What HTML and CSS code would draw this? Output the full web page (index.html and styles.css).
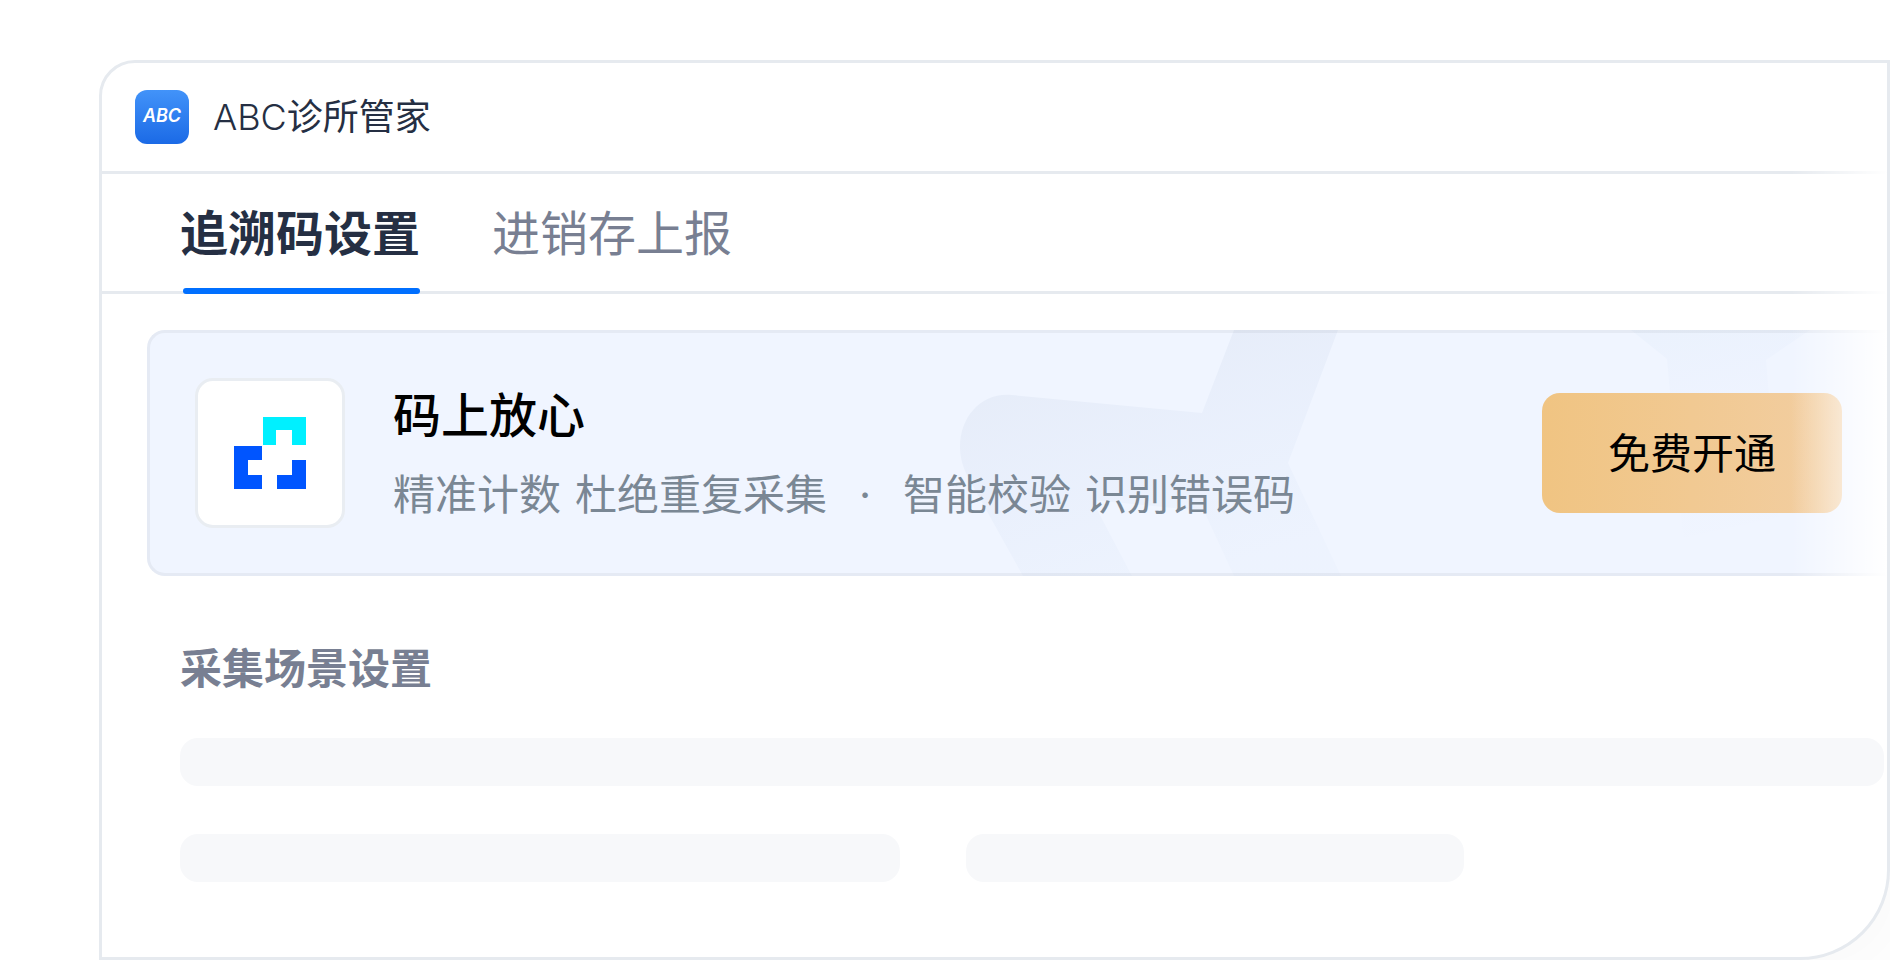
FILE: index.html
```html
<!DOCTYPE html>
<html lang="zh-CN">
<head>
<meta charset="utf-8">
<title>ABC诊所管家</title>
<link rel="stylesheet" href="styles.css">
</head>
<body>
<main class="window">
  <div class="upper">
    <header class="titlebar">
      <span class="app-logo" aria-hidden="true">ABC</span>
      <h1 class="app-name"><span class="latin">ABC</span>诊所管家</h1>
    </header>
    <nav class="tabs">
      <a class="tab tab-active" href="#trace" aria-current="page">追溯码设置</a>
      <a class="tab" href="#stock">进销存上报</a>
    </nav>
    <section class="banner">
      <svg class="banner-art" viewBox="960 330 927 246" preserveAspectRatio="xMaxYMid slice" aria-hidden="true">
        <defs>
          <linearGradient id="art-main" gradientUnits="userSpaceOnUse" x1="1100" y1="320" x2="1180" y2="580">
            <stop offset="0" stop-color="#1d3a6a" stop-opacity=".05"/>
            <stop offset=".45" stop-color="#2450a0" stop-opacity=".035"/>
            <stop offset="1" stop-color="#2b6cc0" stop-opacity=".015"/>
          </linearGradient>
          <linearGradient id="art-side" gradientUnits="userSpaceOnUse" x1="1690" y1="330" x2="1740" y2="560">
            <stop offset="0" stop-color="#2b7cb0" stop-opacity=".025"/>
            <stop offset=".3" stop-color="#2450d0" stop-opacity=".01"/>
            <stop offset="1" stop-color="#2450d0" stop-opacity="0"/>
          </linearGradient>
        </defs>
        <path fill="url(#art-main)" d="M1234 330 1202 413 1012 395C982 392 960 416 960 447 960 458 963 468 969 479L1023 576H1132L1092 500 1204 511 1234 576H1341L1288 463 1338 330Z"/>
        <path fill="url(#art-side)" d="M1631 330 1667 359 1684 550 1690 562 1780 528 1766 360 1810 330Z"/>
      </svg>
      <div class="brand-tile">
        <svg class="brand-mark" viewBox="0 0 72 72" aria-hidden="true">
          <path fill="#00f0ff" d="M29 0H72V28H58V13H42V28H29Z"/>
          <path fill="#0055ff" d="M0 29H28V43H14V58H28V72H0ZM58 43H72V72H43V58H58Z"/>
        </svg>
      </div>
      <div class="banner-text">
        <h2 class="banner-title">码上放心</h2>
        <p class="banner-desc"><span>精准计数</span> <span>杜绝重复采集</span> <span class="dot">·</span> <span>智能校验</span> <span>识别错误码</span></p>
      </div>
      <button class="open-button" type="button">免费开通</button>
    </section>
  </div>
  <section class="settings">
    <h2 class="settings-title">采集场景设置</h2>
    <div class="bars">
      <div class="bar bar-full"></div>
      <div class="bar"></div>
      <div class="bar"></div>
    </div>
  </section>
</main>
</body>
</html>
```

FILE: styles.css
```css
* {
  box-sizing: border-box;
}

body {
  margin: 0;
  padding: 60px 0 0 99px;
  background: #fff;
  color: #252f43;
  font-family: Inter, "Noto Sans CJK SC", sans-serif;
  overflow: hidden;
}

h1, h2, p {
  margin: 0;
}

.window {
  border: 3px solid #e6eaef;
  border-radius: 36px 0 90px 0;
  background: #fff;
  box-shadow: 24px 24px 48px rgba(30, 40, 60, .02);
}

.upper {
  position: relative;
}

/* Fades the rules and the banner out towards the right edge */
.upper::after {
  content: "";
  position: absolute;
  top: 0;
  right: 0;
  bottom: 0;
  width: 96px;
  background: linear-gradient(to right, rgba(255, 255, 255, 0), #fff);
  pointer-events: none;
}

.titlebar {
  display: flex;
  align-items: center;
  gap: 24px;
  padding: 27px 33px;
  border-bottom: 3px solid #e6eaef;
}

.app-logo {
  display: grid;
  place-items: center;
  width: 54px;
  height: 54px;
  padding-bottom: 3px;
  border-radius: 12px;
  background: linear-gradient(#4293f9, #1b6ae6);
  color: #fff;
  font-size: 18px;
  font-style: italic;
  font-weight: 600;
  line-height: 24px;
}

.app-name {
  font-size: 36px;
  font-weight: 400;
  line-height: 48px;
}

.latin {
  font-weight: 300;
}

.tabs {
  display: flex;
  gap: 72px;
  padding: 0 78px;
  border-bottom: 3px solid #e6eaef;
}

.tab {
  position: relative;
  padding: 24px 0 21px;
  color: #787f92;
  font-size: 48px;
  line-height: 72px;
  text-decoration: none;
}

.tab-active {
  color: #252f43;
  font-weight: 600;
}

.tab-active::after {
  content: "";
  position: absolute;
  right: 0;
  bottom: -3px;
  left: 3px;
  height: 6px;
  border-radius: 3px;
  background: #006fff;
}

.banner {
  position: relative;
  display: flex;
  align-items: center;
  margin: 36px 0 0 45px;
  padding: 45px;
  border: 3px solid #e5eaf4;
  border-right: 0;
  border-radius: 18px 0 0 18px;
  background: #f0f5ff;
}

.banner-art {
  position: absolute;
  top: -3px;
  right: 0;
  width: 927px;
  height: calc(100% + 6px);
}

.brand-tile {
  display: grid;
  place-items: center;
  width: 150px;
  height: 150px;
  border: 3px solid #e9edf2;
  border-radius: 18px;
  background: #fff;
}

.brand-mark {
  width: 72px;
  height: 72px;
}

.banner-text {
  position: relative;
  flex: 1;
  margin-left: 48px;
}

.banner-title {
  color: #000;
  font-size: 48px;
  font-weight: 500;
  line-height: 69px;
}

.banner-desc {
  display: flex;
  gap: 14px;
  margin-top: 15px;
  color: #7a8794;
  font-size: 42px;
  line-height: 60px;
}

.dot {
  width: 48px;
  text-align: center;
}

.open-button {
  position: relative;
  width: 300px;
  height: 120px;
  padding: 0 0 6px;
  border: 0;
  border-radius: 18px;
  background: linear-gradient(to right, #f0c482, #f2cea2);
  color: #000;
  font-family: inherit;
  font-size: 42px;
  font-weight: 400;
}

.settings {
  padding: 63px 3px 75px 78px;
}

.settings-title {
  color: #787f92;
  font-size: 42px;
  font-weight: 600;
  line-height: 60px;
}

.bars {
  display: grid;
  grid-template-columns: 720fr 498fr 354fr;
  gap: 48px 66px;
  margin-top: 39px;
}

.bar {
  height: 48px;
  border-radius: 18px;
  background: #f7f8fa;
}

.bar-full {
  grid-column: 1 / -1;
}
```
